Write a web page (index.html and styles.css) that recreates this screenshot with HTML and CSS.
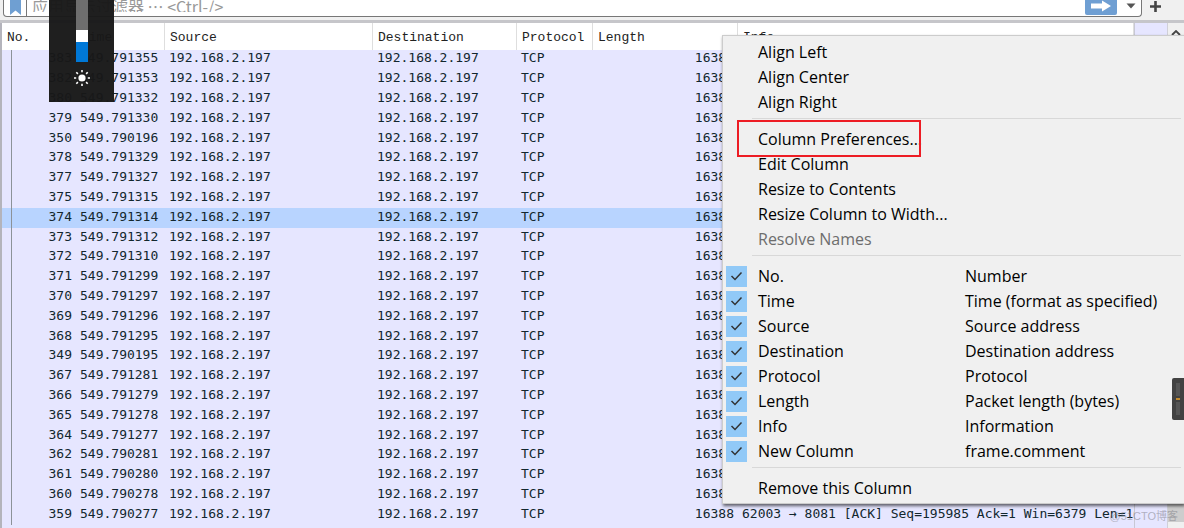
FILE: index.html
```
<!DOCTYPE html>
<html lang="zh-CN">
<head>
<meta charset="utf-8">
<title>Packet list</title>
<link rel="stylesheet" href="styles.css">
</head>
<body>
<div class="app">
  <header class="toolbar">
    <div class="filter">
      <button class="icon-button bookmark" aria-label="Bookmarks">
        <svg width="11" height="15" viewBox="0 0 11 15"><path d="M0 0H11V15L5.500 10.500L0 15Z" fill="#6f9fd2"/></svg>
      </button>
      <input class="filter-input" type="text" aria-label="Display filter" placeholder="应用显示过滤器 … &lt;Ctrl-/&gt;">
      <button class="icon-button apply" aria-label="Apply">
        <svg width="22" height="12" viewBox="0 0 22 12"><path d="M1 3.500H12V0.500L21 6L12 11.500V8.500H1Z" fill="#fff"/></svg>
      </button>
      <button class="icon-button history" aria-label="History">
        <svg width="10" height="6" viewBox="0 0 10 6"><path d="M0.500 0.500H9.500L5 5.500Z" fill="#555"/></svg>
      </button>
    </div>
    <button class="icon-button add" aria-label="Add filter">
      <svg width="11" height="11" viewBox="0 0 11 11"><path d="M5.500 0V11M0 5.500H11" stroke="#444" stroke-width="2.600"/></svg>
    </button>
  </header>

  <main class="panel">
    <div class="list">
      <table class="packets">
        <colgroup><col class="c-no"><col class="c-time"><col class="c-source"><col class="c-dest"><col class="c-proto"><col class="c-len"><col></colgroup>
        <thead><tr><th>No.</th><th>Time</th><th>Source</th><th>Destination</th><th>Protocol</th><th>Length</th><th>Info</th></tr></thead>
        <tbody id="rows"></tbody>
      </table>
    </div>
    <div class="minimap"></div>
    <div class="scrollbar">
      <svg class="scroll-up" width="10" height="6" viewBox="0 0 10 6"><path d="M1 5L5 1L9 5" fill="none" stroke="#444" stroke-width="1.800"/></svg>
      <div class="scroll-thumb"></div>
    </div>
  </main>

  <div class="brightness">
    <input class="level" type="range" min="0" max="100" value="40" aria-label="Brightness">
    <svg width="16" height="16" viewBox="0 0 16 16"><circle cx="8" cy="8" r="3.600" fill="#fff"/><path d="M8 0V2.200M8 13.800V16M0 8H2.200M13.800 8H16M2.300 2.300L3.900 3.900M12.100 12.100L13.700 13.700M2.300 13.700L3.900 12.100M12.100 3.900L13.700 2.300" stroke="#fff" stroke-width="1.600"/></svg>
  </div>

  <div class="menu" lang="en">
    <button class="item">Align Left</button>
    <button class="item">Align Center</button>
    <button class="item">Align Right</button>
    <hr class="rule">
    <button class="item marked">Column Preferences...</button>
    <button class="item">Edit Column</button>
    <button class="item">Resize to Contents</button>
    <button class="item">Resize Column to Width...</button>
    <button class="item" disabled>Resolve Names</button>
    <hr class="rule">
    <label class="check"><input type="checkbox" checked><span>No.</span><span>Number</span></label>
    <label class="check"><input type="checkbox" checked><span>Time</span><span>Time (format as specified)</span></label>
    <label class="check"><input type="checkbox" checked><span>Source</span><span>Source address</span></label>
    <label class="check"><input type="checkbox" checked><span>Destination</span><span>Destination address</span></label>
    <label class="check"><input type="checkbox" checked><span>Protocol</span><span>Protocol</span></label>
    <label class="check"><input type="checkbox" checked><span>Length</span><span>Packet length (bytes)</span></label>
    <label class="check"><input type="checkbox" checked><span>Info</span><span>Information</span></label>
    <label class="check"><input type="checkbox" checked><span>New Column</span><span>frame.comment</span></label>
    <hr class="rule">
    <button class="item">Remove this Column</button>
  </div>

  <div class="side-widget"><i></i><b></b><i></i></div>
  <div class="watermark">@51CTO博客</div>
</div>
<script src="app.js"></script>
</body>
</html>
```

FILE: styles.css
```
*,
*::after {
  box-sizing: border-box;
}

body {
  margin: 0;
  background: #f0f0f0;
}

button,
input {
  margin: 0;
  padding: 0;
  border: 0;
  background: none;
  font: inherit;
  color: inherit;
}

svg {
  display: block;
}

.app {
  position: relative;
  display: flex;
  flex-direction: column;
  height: 100vh;
  overflow: hidden;
}

/* Filter toolbar */
.toolbar {
  display: flex;
  flex: none;
  height: 23px;
  padding: 0 23px 0 3px;
  gap: 8px;
  background: #f0f0f0;
  border-bottom: 3px solid #c6c6ca;
}

.filter {
  display: flex;
  flex: 1;
  height: 17px;
  background: #fff;
  border: 1px solid #777;
  border-top: 0;
  border-radius: 0 0 4px 4px;
}

.icon-button {
  display: flex;
  flex: none;
  align-items: center;
  justify-content: center;
}

.bookmark {
  width: 23px;
  align-items: flex-start;
  border-right: 1px solid #777;
}

.filter-input {
  flex: 1;
  min-width: 0;
  height: 12px;
  padding-left: 5px;
  outline: 0;
  font: 16px/12px "Noto Sans CJK SC", sans-serif;
}

.filter-input::placeholder {
  color: #999;
}

.apply {
  width: 32px;
  height: 15px;
  padding-bottom: 3px;
  border-radius: 0 0 2px 2px;
  background: #6f9fd3;
}

.history {
  width: 20px;
  height: 12px;
  margin: 0 0 0 4px;
}

.add {
  width: 11px;
  height: 12px;
}

/* Packet list */
.panel {
  display: flex;
  flex: 1;
  min-height: 0;
  border-left: 2px solid #b4b4bc;
  background: #e6e6ff;
}

.list {
  flex: 1;
  min-width: 0;
  overflow: hidden;
  border-right: 1px solid #c8c8d4;
}

.packets {
  width: 100%;
  table-layout: fixed;
  border-collapse: separate;
  border-spacing: 0;
  font: 13px/16px "DejaVu Sans Mono", monospace;
  color: #12272e;
}

.c-no { width: 74px; }
.c-time { width: 89px; }
.c-source { width: 208px; }
.c-dest { width: 144px; }
.c-proto { width: 76px; }
.c-len { width: 145px; }

.packets th,
.packets td {
  overflow: hidden;
  white-space: nowrap;
  text-align: left;
}

.packets th {
  height: 27px;
  padding: 2px 4px 0 5px;
  background: #fff;
  border-right: 1px solid #dedede;
  font-family: "Liberation Mono", monospace;
  font-weight: 400;
  color: #222;
}

.packets td {
  height: 20px;
  padding: 0 4px 3px;
}

.packets tr:nth-child(5n + 1) td {
  height: 19px;
}

.packets .num {
  text-align: right;
}

.packets td:first-child {
  background: linear-gradient(#8c9298, #8c9298) 9px 0 / 1px 100% no-repeat;
}

.packets .selected {
  background: #b8d4ff;
}

.minimap {
  flex: none;
  width: 32px;
  background: #e6e6ff;
}

.scrollbar {
  display: flex;
  flex: none;
  flex-direction: column;
  align-items: center;
  width: 17px;
  padding: 7px 0 6px;
  gap: 8px;
  border-left: 1px solid #d0d0d8;
  background: #f0f0f0;
}

.scroll-thumb {
  flex: 1;
  width: 100%;
  background: #cdcdcd;
}

/* Brightness flyout */
.brightness {
  position: absolute;
  top: 0;
  left: 49px;
  display: flex;
  flex-direction: column;
  align-items: center;
  gap: 8px;
  width: 65px;
  height: 102px;
  background: rgba(24, 24, 24, 0.97);
}

.level {
  appearance: none;
  writing-mode: vertical-lr;
  direction: rtl;
  width: 12px;
  height: 62px;
  background: linear-gradient(#6e6e6e 36px, #0078d7 36px);
}

.level::-webkit-slider-thumb {
  appearance: none;
  width: 12px;
  height: 12px;
  background: #fff;
}

/* Header context menu */
.menu {
  position: absolute;
  top: 35px;
  right: 0;
  width: 462px;
  padding: 4px 3px 2px;
  background: #f0f0f0;
  border: 1px solid #ccc;
  border-right: 0;
  box-shadow: 1px 2px 3px rgba(0, 0, 0, 0.6);
  font: 16px/25px "Open Sans", sans-serif;
  color: #000;
}

.item {
  position: relative;
  display: block;
  width: 100%;
  height: 25px;
  padding-left: 32px;
  text-align: left;
}

.item:disabled {
  color: #6d6d6d;
}

.marked::after {
  content: "";
  position: absolute;
  top: -7px;
  left: 11px;
  width: 184px;
  height: 37px;
  border: 2px solid #ed1c24;
}

.rule {
  height: 1px;
  margin: 3px 0 8px 26px;
  border: 0;
  background: #d8d8d8;
}

.check {
  display: grid;
  grid-template-columns: 21px 196px 1fr;
  column-gap: 11px;
  align-items: center;
  height: 25px;
}

.check input {
  appearance: none;
  width: 21px;
  height: 21px;
  background: #91c9f7;
}

.check input:checked {
  background: #91c9f7 url("data:image/svg+xml,%3Csvg xmlns='http://www.w3.org/2000/svg' width='21' height='21'%3E%3Cpath d='M5.500 10L9 13.500L15.500 6.500' fill='none' stroke='%23333' stroke-width='1.500'/%3E%3C/svg%3E");
}

/* Floating pieces */
.side-widget {
  position: absolute;
  top: 378px;
  right: 0;
  display: flex;
  flex-direction: column;
  align-items: center;
  gap: 2px;
  width: 12px;
  padding: 5px 0;
  border-radius: 2px 0 0 2px;
  background: #424242;
}

.side-widget i {
  width: 4px;
  height: 13px;
  background: #555;
}

.side-widget b {
  width: 4px;
  height: 2px;
  background: #c08a30;
}

.watermark {
  position: absolute;
  right: 6px;
  bottom: 3px;
  font: 11px/18px "Liberation Sans", "Noto Sans CJK SC", sans-serif;
  color: rgba(120, 120, 130, 0.5);
}
```

FILE: app.js
```
const packets = [
  [383, "549.791355"], [382, "549.791353"], [380, "549.791332"], [379, "549.791330"],
  [350, "549.790196"], [378, "549.791329"], [377, "549.791327"], [375, "549.791315"],
  [374, "549.791314"], [373, "549.791312"], [372, "549.791310"], [371, "549.791299"],
  [370, "549.791297"], [369, "549.791296"], [368, "549.791295"], [349, "549.790195"],
  [367, "549.791281"], [366, "549.791279"], [365, "549.791278"], [364, "549.791277"],
  [362, "549.790281"], [361, "549.790280"], [360, "549.790278"], [359, "549.790277"]
];
const info = "62003 → 8081 [ACK] Seq=195985 Ack=1 Win=6379 Len=16384";

document.getElementById("rows").innerHTML = packets.map(([no, time]) => `
  <tr class="${no === 374 ? "selected" : ""}">
    <td class="num">${no}</td><td>${time}</td><td>192.168.2.197</td><td>192.168.2.197</td>
    <td>TCP</td><td class="num">16388</td><td>${info}</td>
  </tr>`).join("");
```
